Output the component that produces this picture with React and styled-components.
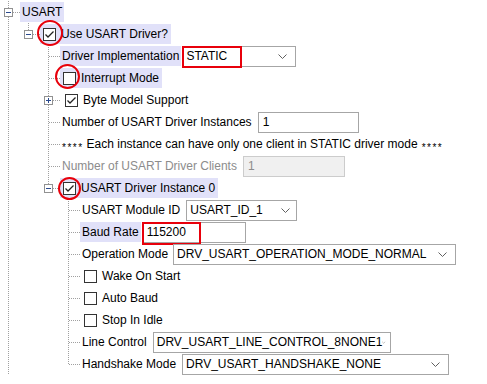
import React from "react";
import styled, { createGlobalStyle } from "styled-components";

const GlobalStyle = createGlobalStyle`
  html, body {
    margin: 0;
    padding: 0;
    background: #fff;
  }
  body {
    font-family: "Liberation Sans", Arial, sans-serif;
    font-size: 12px;
    color: #000;
  }
`;

const Tree = styled.div`
  display: flex;
  flex-direction: column;
  padding-top: 1px;
`;

const Row = styled.div`
  display: flex;
  align-items: center;
  height: 22px;
  white-space: nowrap;
`;

const GuideCell = styled.svg`
  flex: 0 0 20px;
  width: 20px;
  height: 22px;
  display: block;
`;

const Label = styled.span`
  display: inline-flex;
  align-items: center;
  height: 20px;
  padding: 0 2px;
  color: ${({ $muted }) => ($muted ? "#8c8c8c" : "#000")};
  background: ${({ $hl }) => ($hl ? "#e1e1f9" : "transparent")};
`;

const Stars = styled.span`
  font-size: 10px;
  letter-spacing: 1.5px;
  margin-top: 6px;
  margin-left: ${({ $after }) => ($after ? 4 : 0)}px;
  margin-right: ${({ $after }) => ($after ? 0 : 3)}px;
`;

const CheckItem = styled.span`
  display: inline-flex;
  align-items: center;
  gap: 5px;
  height: 20px;
  padding: 0 3px 0 ${({ $inset }) => $inset}px;
  background: ${({ $hl }) => ($hl ? "#e1e1f9" : "transparent")};
`;

const Box = styled.span`
  position: relative;
  flex: 0 0 13px;
  width: 13px;
  height: 13px;
  box-sizing: border-box;
  border: 1px solid #333;
  background: #fff;
  display: inline-flex;
  align-items: center;
  justify-content: center;
`;

const Ring = styled.span`
  position: absolute;
  width: ${({ $size }) => $size}px;
  height: ${({ $size }) => $size}px;
  left: calc(50% - ${({ $size }) => $size / 2}px + ${({ $dx }) => $dx}px);
  top: calc(50% - ${({ $size }) => $size / 2}px + ${({ $dy }) => $dy}px);
  box-sizing: border-box;
  border: 2px solid #e8000b;
  border-radius: 50%;
  pointer-events: none;
`;

const Select = styled.span`
  position: relative;
  display: inline-flex;
  align-items: center;
  justify-content: space-between;
  box-sizing: border-box;
  width: ${({ $w }) => $w}px;
  height: 21px;
  margin-left: ${({ $gap }) => $gap ?? 3}px;
  padding: 0 ${({ $pr }) => $pr ?? 8}px 0 3px;
  border: 1px solid #a6a6a6;
  background: #fff;
`;

const Field = styled.span`
  position: relative;
  display: inline-flex;
  align-items: center;
  box-sizing: border-box;
  width: ${({ $w }) => $w}px;
  height: 21px;
  margin-left: ${({ $gap }) => $gap ?? 3}px;
  padding: 0 4px;
  border: 1px solid ${({ $disabled }) => ($disabled ? "#cccccc" : "#a6a6a6")};
  background: ${({ $disabled }) => ($disabled ? "#f0f0f0" : "#fff")};
  color: ${({ $disabled }) => ($disabled ? "#8c8c8c" : "#000")};
`;

const Mark = styled.span`
  position: absolute;
  left: -1px;
  top: -1px;
  bottom: ${({ $b }) => $b ?? -1}px;
  width: ${({ $w }) => $w}px;
  box-sizing: border-box;
  border: 2px solid #e8000b;
  pointer-events: none;
`;

function Guide({ kind, box }) {
  const stroke = "#a0a0a0";
  return (
    <GuideCell viewBox="0 0 20 22">
      {kind !== "blank" && (
        <line
          x1="8.5"
          y1="0"
          x2="8.5"
          y2={kind === "elbow" ? 12 : 22}
          stroke={stroke}
          strokeDasharray="1 1"
        />
      )}
      {(kind === "tee" || kind === "elbow") && (
        <line x1="9" y1="11.5" x2="20" y2="11.5" stroke={stroke} strokeDasharray="1 1" />
      )}
      {box && (
        <>
          <rect x="4.5" y="7.5" width="8" height="8" fill="#fff" stroke="#919191" />
          <line x1="6" y1="11.5" x2="11" y2="11.5" stroke="#2a4a8e" />
          {box === "plus" && <line x1="8.5" y1="9" x2="8.5" y2="14" stroke="#2a4a8e" />}
        </>
      )}
    </GuideCell>
  );
}

function Chevron() {
  return (
    <svg width="9" height="5" viewBox="0 0 9 5">
      <polyline points="0.5,0.5 4.5,4.5 8.5,0.5" fill="none" stroke="#606060" />
    </svg>
  );
}

function Check({ checked, ring }) {
  return (
    <Box>
      {checked && (
        <svg width="11" height="11" viewBox="0 0 11 11">
          <polyline points="1.5,5.5 4,8 9.5,2.5" fill="none" stroke="#222" strokeWidth="1.3" />
        </svg>
      )}
      {ring && <Ring $size={ring.size} $dx={ring.dx} $dy={ring.dy} />}
    </Box>
  );
}

function CheckRow({ label, checked, hl, ring, inset = 3 }) {
  return (
    <CheckItem $hl={hl} $inset={inset}>
      <Check checked={checked} ring={ring} />
      {label}
    </CheckItem>
  );
}

const L1 = ["pipe"];
const L2 = ["pipe", "blank"];
const L3 = ["pipe", "blank", "blank"];

const rows = [
  { guides: [], last: "tee", box: "minus", body: <Label $hl>USART</Label> },
  {
    guides: L1,
    last: "elbow",
    box: "minus",
    body: (
      <CheckRow label="Use USART Driver?" checked hl ring={{ size: 26, dx: 0, dy: -1 }} />
    ),
  },
  {
    guides: L2,
    last: "tee",
    body: (
      <>
        <Label $hl>Driver Implementation</Label>
        <Select $w={114} $gap={1}>
          STATIC
          <Chevron />
          <Mark $w={60} $b={-2} />
        </Select>
      </>
    ),
  },
  {
    guides: L2,
    last: "tee",
    body: <CheckRow label="Interrupt Mode" hl ring={{ size: 25, dx: -2, dy: -2 }} />,
  },
  {
    guides: L2,
    last: "tee",
    box: "plus",
    body: <CheckRow label="Byte Model Support" checked inset={5} />,
  },
  {
    guides: L2,
    last: "tee",
    body: (
      <>
        <Label>Number of USART Driver Instances</Label>
        <Field $w={101} $gap={4}>1</Field>
      </>
    ),
  },
  {
    guides: L2,
    last: "tee",
    body: (
      <Label>
        <Stars>****</Stars>
        Each instance can have only one client in STATIC driver mode
        <Stars $after>****</Stars>
      </Label>
    ),
  },
  {
    guides: L2,
    last: "tee",
    body: (
      <>
        <Label $muted>Number of USART Driver Clients</Label>
        <Field $w={102} $gap={4} $disabled>
          1
        </Field>
      </>
    ),
  },
  {
    guides: L2,
    last: "elbow",
    box: "minus",
    body: (
      <CheckRow label="USART Driver Instance 0" checked hl ring={{ size: 23, dx: 0, dy: 0 }} />
    ),
  },
  {
    guides: L3,
    last: "tee",
    body: (
      <>
        <Label>USART Module ID</Label>
        <Select $w={111} $gap={4} $pr={6}>
          USART_ID_1
          <Chevron />
        </Select>
      </>
    ),
  },
  {
    guides: L3,
    last: "tee",
    body: (
      <>
        <Label $hl>Baud Rate</Label>
        <Field $w={104} $gap={1}>
          115200
          <Mark $w={59} $b={-3} />
        </Field>
      </>
    ),
  },
  {
    guides: L3,
    last: "tee",
    body: (
      <>
        <Label>Operation Mode</Label>
        <Select $w={283} $pr={8}>
          DRV_USART_OPERATION_MODE_NORMAL
          <Chevron />
        </Select>
      </>
    ),
  },
  { guides: L3, last: "tee", body: <CheckRow label="Wake On Start" inset={4} /> },
  { guides: L3, last: "tee", body: <CheckRow label="Auto Baud" inset={4} /> },
  { guides: L3, last: "tee", body: <CheckRow label="Stop In Idle" inset={4} /> },
  {
    guides: L3,
    last: "tee",
    body: (
      <>
        <Label>Line Control</Label>
        <Select $w={238} $gap={4} $pr={4}>
          DRV_USART_LINE_CONTROL_8NONE1
          <Chevron />
        </Select>
      </>
    ),
  },
  {
    guides: L3,
    last: "elbow",
    body: (
      <>
        <Label>Handshake Mode</Label>
        <Select $w={267} $gap={4} $pr={8}>
          DRV_USART_HANDSHAKE_NONE
          <Chevron />
        </Select>
      </>
    ),
  },
];

export default function App() {
  return (
    <>
      <GlobalStyle />
      <Tree>
        {rows.map((row, i) => (
          <Row key={i}>
            {row.guides.map((g, j) => (
              <Guide key={j} kind={g} />
            ))}
            <Guide kind={row.last} box={row.box} />
            {row.body}
          </Row>
        ))}
      </Tree>
    </>
  );
}
